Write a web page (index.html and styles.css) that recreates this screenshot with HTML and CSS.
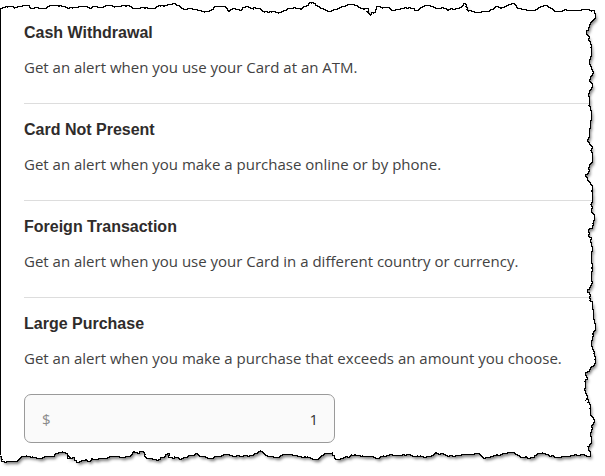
FILE: index.html
```html
<!DOCTYPE html>
<html lang="en">
<head>
<meta charset="utf-8">
<title>Alerts</title>
<link rel="stylesheet" href="styles.css">
</head>
<body>
<div class="page">
  <div class="list">
    <section class="item">
      <h3 class="title">Cash Withdrawal</h3>
      <p class="desc">Get an alert when you use your Card at an ATM.</p>
    </section>
    <section class="item">
      <h3 class="title">Card Not Present</h3>
      <p class="desc">Get an alert when you make a purchase online or by phone.</p>
    </section>
    <section class="item">
      <h3 class="title">Foreign Transaction</h3>
      <p class="desc">Get an alert when you use your Card in a different country or currency.</p>
    </section>
    <section class="item">
      <h3 class="title">Large Purchase</h3>
      <p class="desc">Get an alert when you make a purchase that exceeds an amount you choose.</p>
      <div class="amount"><span class="currency">$</span><span class="value">1</span></div>
    </section>
  </div>

  <svg class="torn" width="605" height="476" viewBox="0 0 605 476" aria-hidden="true">
    <defs>
      <filter id="tear" filterUnits="userSpaceOnUse" primitiveUnits="userSpaceOnUse" x="-60" y="-20" width="700" height="520" color-interpolation-filters="sRGB">
        <feTurbulence type="fractalNoise" baseFrequency="0.04" numOctaves="6" seed="11" result="noise"/>
        <feDisplacementMap in="SourceGraphic" in2="noise" scale="21" xChannelSelector="R" yChannelSelector="G" result="paper"/>
        <feFlood flood-color="#ffffff" result="white"/>
        <feComposite in="white" in2="paper" operator="out" result="outside"/>
        <feOffset in="paper" dx="2" dy="3" result="off"/>
        <feGaussianBlur in="off" stdDeviation="1.6" result="blur"/>
        <feFlood flood-color="#000000" flood-opacity="0.5" result="sc"/>
        <feComposite in="sc" in2="blur" operator="in" result="shadowc"/>
        <feComposite in="shadowc" in2="paper" operator="out" result="shadow"/>
        <feMorphology in="paper" operator="dilate" radius="1" result="dil"/>
        <feFlood flood-color="#000000" result="blk"/>
        <feComposite in="blk" in2="dil" operator="in" result="dilb"/>
        <feComposite in="dilb" in2="paper" operator="out" result="edge"/>
        <feMerge>
          <feMergeNode in="outside"/>
          <feMergeNode in="shadow"/>
          <feMergeNode in="edge"/>
        </feMerge>
      </filter>
    </defs>
    <rect x="-40" y="9" width="630" height="447" fill="#000" filter="url(#tear)"/>
    <rect x="0" y="9" width="1" height="446" fill="#000"/>
  </svg>
</div>
</body>
</html>
```
FILE: styles.css
```css
html, body {
  margin: 0;
  padding: 0;
  background: #ffffff;
}

.page {
  position: relative;
  width: 605px;
  height: 476px;
  overflow: hidden;
  background: #ffffff;
}

.list {
  padding-top: 7px;
  padding-left: 24px;
}

.item {
  padding: 16px 0 25px 0;
  border-bottom: 1px solid #dddddd;
}

.title {
  margin: 0;
  font-family: "Liberation Sans", Arial, sans-serif;
  font-weight: bold;
  font-size: 16px;
  line-height: 20px;
  color: #2f2c2b;
}

.desc {
  margin: 13px 0 0 0;
  font-family: "Open Sans", "Noto Sans", sans-serif;
  font-size: 15px;
  line-height: 22px;
  color: #424242;
}

.amount {
  margin-top: 25px;
  box-sizing: border-box;
  width: 311px;
  height: 49px;
  border: 1px solid #9a9a9a;
  border-radius: 7px;
  background: #fafafa;
  display: flex;
  align-items: center;
  justify-content: space-between;
  padding: 0 16px 0 17px;
  font-family: "Open Sans", "Noto Sans", sans-serif;
  font-size: 15px;
}

.currency {
  color: #8a8a8a;
}

.value {
  color: #333333;
}

.torn {
  position: absolute;
  top: 0;
  left: 0;
  pointer-events: none;
}
```
